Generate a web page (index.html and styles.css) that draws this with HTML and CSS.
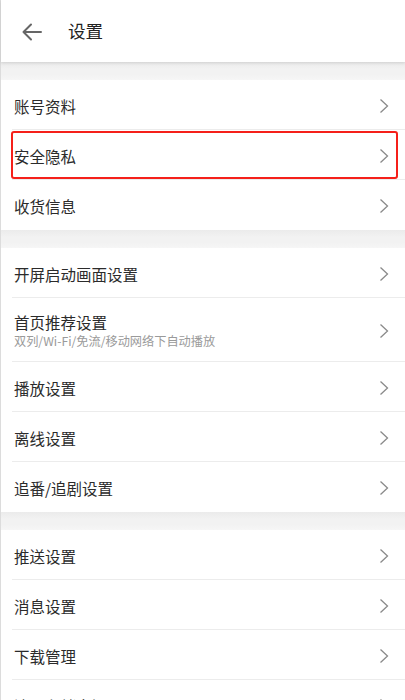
FILE: index.html
```html
<!DOCTYPE html>
<html lang="zh-CN">
<head>
<meta charset="utf-8">
<title>设置</title>
<link rel="stylesheet" href="styles.css">
</head>
<body>
<div class="app">
  <header class="topbar">
    <svg class="back" width="20" height="18" viewBox="0 0 20 18" aria-hidden="true">
      <path d="M1.5 9 H19 M9 1.5 L1.5 9 L9 16.5" fill="none" stroke="#666" stroke-width="2" stroke-linecap="round" stroke-linejoin="round"/>
    </svg>
    <h1 class="title">设置</h1>
  </header>

  <div class="gap"></div>
  <section class="group">
    <div class="row"><span class="label">账号资料</span><svg class="chev" width="10" height="16" viewBox="0 0 10 16"><path d="M1.5 1.5 L8.5 8 L1.5 14.5" fill="none" stroke="#8a8a8a" stroke-width="1.3"/></svg></div>
    <div class="row highlighted"><span class="label">安全隐私</span><svg class="chev" width="10" height="16" viewBox="0 0 10 16"><path d="M1.5 1.5 L8.5 8 L1.5 14.5" fill="none" stroke="#8a8a8a" stroke-width="1.3"/></svg><span class="mark"></span></div>
    <div class="row"><span class="label">收货信息</span><svg class="chev" width="10" height="16" viewBox="0 0 10 16"><path d="M1.5 1.5 L8.5 8 L1.5 14.5" fill="none" stroke="#8a8a8a" stroke-width="1.3"/></svg></div>
  </section>

  <div class="gap"></div>
  <section class="group">
    <div class="row"><span class="label">开屏启动画面设置</span><svg class="chev" width="10" height="16" viewBox="0 0 10 16"><path d="M1.5 1.5 L8.5 8 L1.5 14.5" fill="none" stroke="#8a8a8a" stroke-width="1.3"/></svg></div>
    <div class="row tall"><div class="texts"><span class="label">首页推荐设置</span><span class="sub">双列/Wi-Fi/免流/移动网络下自动播放</span></div><svg class="chev" width="10" height="16" viewBox="0 0 10 16"><path d="M1.5 1.5 L8.5 8 L1.5 14.5" fill="none" stroke="#8a8a8a" stroke-width="1.3"/></svg></div>
    <div class="row"><span class="label">播放设置</span><svg class="chev" width="10" height="16" viewBox="0 0 10 16"><path d="M1.5 1.5 L8.5 8 L1.5 14.5" fill="none" stroke="#8a8a8a" stroke-width="1.3"/></svg></div>
    <div class="row"><span class="label">离线设置</span><svg class="chev" width="10" height="16" viewBox="0 0 10 16"><path d="M1.5 1.5 L8.5 8 L1.5 14.5" fill="none" stroke="#8a8a8a" stroke-width="1.3"/></svg></div>
    <div class="row"><span class="label">追番/追剧设置</span><svg class="chev" width="10" height="16" viewBox="0 0 10 16"><path d="M1.5 1.5 L8.5 8 L1.5 14.5" fill="none" stroke="#8a8a8a" stroke-width="1.3"/></svg></div>
  </section>

  <div class="gap"></div>
  <section class="group">
    <div class="row"><span class="label">推送设置</span><svg class="chev" width="10" height="16" viewBox="0 0 10 16"><path d="M1.5 1.5 L8.5 8 L1.5 14.5" fill="none" stroke="#8a8a8a" stroke-width="1.3"/></svg></div>
    <div class="row"><span class="label">消息设置</span><svg class="chev" width="10" height="16" viewBox="0 0 10 16"><path d="M1.5 1.5 L8.5 8 L1.5 14.5" fill="none" stroke="#8a8a8a" stroke-width="1.3"/></svg></div>
    <div class="row"><span class="label">下载管理</span><svg class="chev" width="10" height="16" viewBox="0 0 10 16"><path d="M1.5 1.5 L8.5 8 L1.5 14.5" fill="none" stroke="#8a8a8a" stroke-width="1.3"/></svg></div>
    <div class="row"><span class="label">清理存储空间</span><svg class="chev" width="10" height="16" viewBox="0 0 10 16"><path d="M1.5 1.5 L8.5 8 L1.5 14.5" fill="none" stroke="#8a8a8a" stroke-width="1.3"/></svg></div>
  </section>
</div>
</body>
</html>
```

FILE: styles.css
```css
html, body {
  margin: 0;
  padding: 0;
  background: #ffffff;
}
body {
  font-family: "Noto Sans CJK SC", "Noto Sans", sans-serif;
  color: #333;
  overflow: hidden;
}
.app {
  width: 405px;
  min-height: 700px;
  box-sizing: border-box;
  border-left: 1px solid #dcdcdc;
  background: #fff;
}
.topbar {
  height: 62px;
  display: flex;
  align-items: center;
  background: #fff;
  position: relative;
  z-index: 1;
  box-shadow: 0 1px 3px rgba(0, 0, 0, 0.12);
}
.back {
  margin-left: 21px;
  margin-top: 1px;
}
.title {
  margin: 0 0 0 26px;
  font-size: 17.5px;
  font-weight: 400;
  color: #222;
  line-height: 1;
}
.gap {
  height: 18px;
  background: linear-gradient(#ebebeb, #f2f2f2 40%, #f2f2f2 70%, #f6f6f6);
}
.group {
  padding-left: 11px;
  background: #fff;
}
.row {
  height: 50px;
  box-sizing: border-box;
  display: flex;
  align-items: center;
  justify-content: space-between;
  padding: 2px 16px 0 2px;
  border-bottom: 1px solid #ececec;
  position: relative;
}
.row:last-child {
  border-bottom: none;
}
.row.tall {
  height: 64px;
}
.label {
  font-size: 15.5px;
  color: #2b2b2b;
  line-height: 22px;
}
.texts {
  display: flex;
  flex-direction: column;
}
.texts .label {
  line-height: 21px;
}
.sub {
  font-size: 12.2px;
  color: #9a9a9a;
  line-height: 17px;
}
.chev {
  flex: none;
}
.mark {
  position: absolute;
  left: -1px;
  right: 7px;
  top: 1px;
  bottom: 0;
  border: 2px solid #f5201a;
  border-radius: 3px;
  pointer-events: none;
}
```
